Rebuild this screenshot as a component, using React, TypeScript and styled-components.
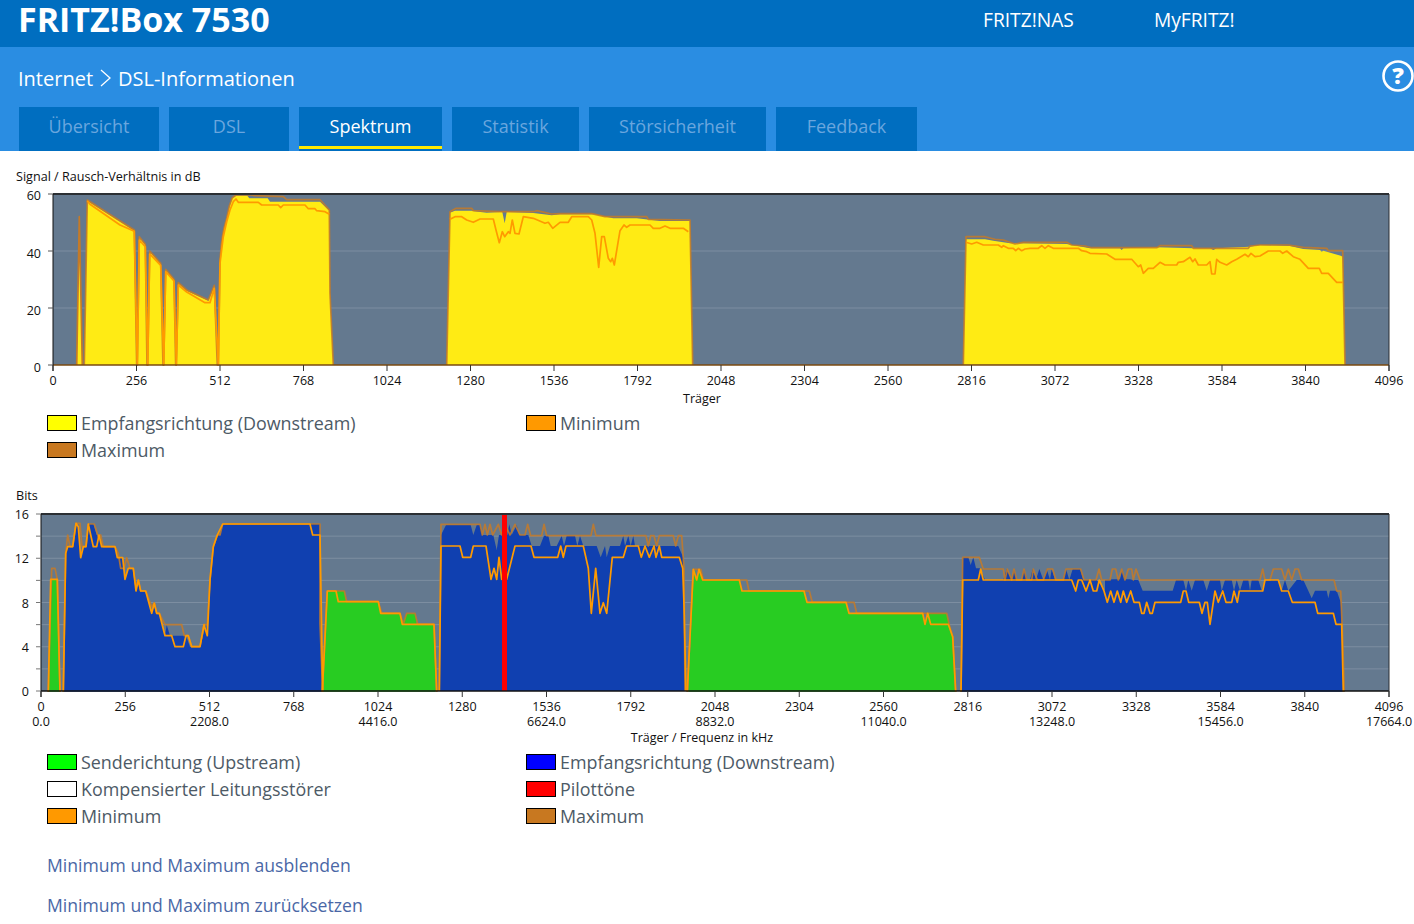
import React from "react";
import styled, { createGlobalStyle } from "styled-components";

const FONT = `"Open Sans", "Noto Sans", sans-serif`;

const Global = createGlobalStyle`
  html, body { margin: 0; padding: 0; background: #fff; }
  body { font-family: ${FONT}; width: 1414px; height: 924px; overflow: hidden; }
`;

const Page = styled.div`
  width: 1414px;
  height: 924px;
  overflow: hidden;
  display: flex;
  flex-direction: column;
`;
const TopBar = styled.header`
  height: 47px;
  box-sizing: border-box;
  padding-bottom: 8px;
  background: #006ec0;
  display: flex;
  align-items: center;
  color: #fff;
  flex: none;
`;
const Brand = styled.div`
  font-size: 34px;
  font-weight: 700;
  line-height: 34px;
  margin: -2px 0 0 18px;
  width: 965px;
  white-space: nowrap;
`;
const TopLink = styled.a<{ $w: number }>`
  font-size: 19.2px;
  width: ${(p) => p.$w}px;
  white-space: nowrap;
  color: #fff;
`;
const SubBar = styled.div`
  height: 104px;
  background: #2a8de2;
  flex: none;
  display: flex;
  flex-direction: column;
  position: relative;
`;
const Crumbs = styled.div`
  height: 60px;
  box-sizing: border-box;
  padding: 2px 0 0 18px;
  display: flex;
  align-items: center;
  gap: 7px;
  color: #fff;
  font-size: 20px;
`;
const HelpIcon = styled.svg`
  position: absolute;
  left: 1382px;
  top: 12px;
`;
const Tabs = styled.nav`
  display: flex;
  gap: 10px;
  padding-left: 19px;
  height: 44px;
`;
const Tab = styled.div<{ $w: number; $active?: boolean }>`
  width: ${(p) => p.$w}px;
  height: 44px;
  box-sizing: border-box;
  background: #006ec0;
  color: ${(p) => (p.$active ? "#fff" : "#6aa6de")};
  font-size: 18px;
  display: flex;
  align-items: center;
  justify-content: center;
  padding-bottom: 6px;
  position: relative;
  &::after {
    content: "";
    display: ${(p) => (p.$active ? "block" : "none")};
    position: absolute;
    left: 0;
    right: 0;
    top: 39px;
    height: 3px;
    background: #ffe900;
  }
`;
const Content = styled.main`
  flex: 1;
  display: flex;
  flex-direction: column;
`;
const ChartTitle = styled.div<{ $top: number }>`
  font-size: 12.6px;
  line-height: 18px;
  color: #111;
  padding-left: 16px;
  margin-top: ${(p) => p.$top}px;
  height: 18px;
`;
const ChartSvg = styled.svg`
  display: block;
  flex: none;
`;
const Legend = styled.div`
  display: grid;
  grid-template-columns: 479px 1fr;
  grid-auto-rows: 27px;
  padding-left: 47px;
`;
const LegendItem = styled.div`
  display: flex;
  align-items: center;
  gap: 4px;
  color: #4d5a66;
  font-size: 17.9px;
  white-space: nowrap;
`;
const Swatch = styled.span<{ $c: string }>`
  width: 30px;
  height: 16px;
  box-sizing: border-box;
  border: 1px solid #000;
  background: ${(p) => p.$c};
  flex: none;
`;
const ActionLink = styled.a<{ $top: number }>`
  display: block;
  margin: ${(p) => p.$top}px 0 0 47px;
  color: #4a67a6;
  font-size: 17.6px;
  line-height: 26px;
  white-space: nowrap;
`;
const Plot = styled.rect`
  fill: #64798f;
`;
const Grid = styled.line`
  stroke: #7d8ea1;
  stroke-width: 1;
`;
const Edge = styled.line<{ $w?: number; $c?: string }>`
  stroke: ${(p) => p.$c ?? "#2b2f33"};
  stroke-width: ${(p) => p.$w ?? 1};
`;
const Area = styled.polygon<{ $c: string }>`
  fill: ${(p) => p.$c};
`;
const Trace = styled.polyline<{ $c: string; $o?: number }>`
  fill: none;
  stroke: ${(p) => p.$c};
  stroke-opacity: ${(p) => p.$o ?? 1};
  stroke-width: 1.7;
  stroke-linejoin: round;
`;
const Pilot = styled.rect`
  fill: #f00;
`;
const Tick = styled.text<{ $anchor?: string }>`
  font-family: ${FONT};
  font-size: 12.5px;
  fill: #111;
  text-anchor: ${(p) => p.$anchor ?? "middle"};
`;

const z = (ox: number, oy: number, s: string) =>
  s
    .split(" ")
    .map((p) => {
      const [x, y] = p.split(",").map(Number);
      return `${(x / 3 + ox).toFixed(1)},${(y / 3 + oy).toFixed(1)}`;
    })
    .join(" ");

type Series = { fill: string; area: string; max: string; min: string };
const YEL = "#ffeb14";
const BLU = "#1040b0";
const GRN = "#28cc22";
const MAXC = "#c47a28";
const MINC = "#ff9a00";

const snrPts = (s: string) => z(0, 160, s);
const snr1Spike = snrPts("230,615 238,170 247,615");
const snr1A = snrPts(
  "253,615 262,122 403,212 410,615 412,615 418,232 436,255 441,615 443,615 449,275 482,312 489,615 491,615 497,330 522,360 527,615 529,615 535,370 560,392 625,422 643,378 652,615 655,615 660,300 664,255 668,225 672,205 680,175 688,140 697,115 708,107 742,107 748,115 803,115 810,125 960,125 988,152 990,400 1000,615"
);
const snr1Max = snrPts(
  "253,615 262,120 403,210 410,615 412,615 418,230 436,253 441,615 443,615 449,273 482,310 489,615 491,615 497,328 522,358 527,615 529,615 535,368 560,390 625,420 643,376 652,615 655,615 660,300 664,255 668,225 672,205 680,175 688,138 697,113 708,105 755,105 763,107 850,110 860,119 960,119 988,150 990,400 1000,615"
);
const snr1Min = snrPts(
  "262,122 270,133 360,195 403,214 412,615 418,240 436,260 443,615 449,282 482,316 491,615 497,335 522,363 529,615 535,375 560,396 615,428 630,428 643,385 655,615 660,310 670,230 680,185 690,150 700,125 708,117 715,127 775,127 785,135 835,135 842,143 850,135 915,135 925,146 945,146 950,152 975,155 988,163"
);

const snrSeries: Series[] = [
  { fill: YEL, area: snr1A, max: snr1Max, min: snr1Min },
  {
    fill: YEL,
    area: z(420, 190, "80,525 90,68 105,62 155,62 175,65 200,68 240,66 247,66 254,100 260,66 340,69 395,76 420,73 520,73 580,85 650,85 670,87 720,93 810,93 818,525"),
    max: z(420, 190, "80,525 90,65 108,55 155,55 160,62 240,65 340,65 350,62 395,72 420,71 515,71 555,80 680,80 685,88 810,90 818,525"),
    min: z(420, 190, "90,88 105,80 125,80 140,90 160,97 180,87 220,87 228,120 238,158 247,125 254,140 265,125 270,130 277,90 285,130 297,132 310,80 340,85 375,100 385,97 398,115 420,97 445,97 455,80 505,80 515,90 525,130 536,232 545,140 553,140 565,205 572,215 577,205 583,225 600,122 612,105 620,112 630,105 690,105 700,115 720,115 735,108 750,115 790,115 805,125"),
  },
  {
    fill: YEL,
    area: z(950, 220, "40,434 48,58 105,58 130,62 180,70 215,70 350,72 420,85 510,85 515,90 520,85 620,82 730,85 780,85 790,90 800,85 900,80 930,75 1020,78 1060,87 1110,90 1115,95 1120,92 1172,107 1178,110 1185,434"),
    max: z(950, 220, "40,434 48,50 105,50 135,58 160,60 195,72 220,67 350,67 365,75 405,78 425,83 620,83 630,77 725,77 730,85 895,85 900,78 930,75 1015,75 1060,82 1130,85 1135,92 1178,92 1185,434"),
    min: z(950, 220, "48,67 65,72 80,67 100,75 145,75 155,82 160,77 175,85 190,85 197,92 205,85 215,92 225,87 240,85 265,85 275,77 285,85 295,77 310,85 385,85 395,92 410,95 420,100 470,102 495,118 545,118 565,140 572,135 580,160 595,145 610,145 630,127 645,135 680,135 685,127 700,125 720,112 728,125 735,117 745,135 770,135 780,125 785,162 795,162 800,118 810,127 830,135 845,125 860,118 885,103 895,110 903,100 915,110 930,108 955,93 990,93 998,100 1010,93 1030,110 1050,118 1075,145 1108,145 1115,160 1135,160 1160,187 1178,187"),
  },
];

const bitSeries: Series[] = [
  {
    fill: GRN,
    area: z(0, 490, "145,605 152,268 172,268 180,605"),
    max: z(0, 490, "145,605 155,235 165,235 172,268 180,605"),
    min: z(0, 490, "145,605 152,268 172,268 180,605"),
  },
  {
    fill: BLU,
    area: z(0, 490, "190,605 197,180 205,170 217,170 228,100 235,105 242,200 250,170 258,170 265,102 280,102 290,135 300,135 305,170 345,170 352,203 368,203 375,268 385,235 400,235 408,303 415,270 422,303 437,303 455,370 463,340 470,370 478,370 495,437 500,404 510,437 550,437 558,437 570,470 600,470 618,404 622,437 630,270 640,170 652,135 660,135 668,102 930,102 960,102 960,135 968,605"),
    max: z(0, 490, "190,605 197,190 203,135 210,170 218,170 228,100 240,100 246,170 258,170 265,102 283,102 295,140 302,135 310,170 345,170 355,190 362,235 372,235 380,203 390,235 400,235 408,290 415,270 422,303 437,303 455,350 463,338 470,370 478,370 495,404 545,404 553,437 565,437 575,470 600,470 612,404 622,404 630,270 640,170 652,135 660,135 668,102 960,102 960,400 968,605"),
    min: z(0, 490, "190,605 197,190 203,170 218,170 228,100 235,110 242,203 250,170 258,170 265,102 280,170 290,170 297,135 305,170 345,170 352,203 368,203 375,268 385,235 400,235 408,303 415,270 422,303 437,303 455,370 463,340 470,370 478,370 495,437 515,437 525,470 550,470 558,437 565,437 575,470 600,470 612,404 622,437 630,270 640,170 652,135 668,102 930,102 938,135 960,135 968,605"),
  },
  {
    fill: GRN,
    area: z(315, 575, "22,350 37,48 88,48 93,80 190,80 197,115 255,115 262,148 275,115 300,115 305,148 357,148 362,350"),
    max: z(315, 575, "22,350 37,48 88,48 95,80 190,80 200,115 255,115 265,148 275,115 300,115 308,148 357,148 365,350"),
    min: z(315, 575, "22,350 37,48 63,48 70,80 190,80 197,115 255,115 262,148 357,148 365,350"),
  },
  {
    fill: BLU,
    area: z(430, 505, "28,558 33,90 48,60 122,60 130,90 140,60 150,60 157,90 190,90 200,135 207,90 232,90 238,58 245,90 260,60 268,90 295,90 305,123 330,123 342,92 355,92 362,123 380,123 395,92 402,123 410,92 435,92 442,123 450,92 460,123 500,123 512,157 525,123 530,157 540,123 570,123 580,92 585,123 595,92 602,123 610,92 615,123 745,123 760,158 765,558"),
    max: z(430, 505, "28,558 33,58 150,58 157,90 165,58 172,90 180,58 188,90 205,58 215,90 225,58 240,90 255,58 270,90 285,90 293,58 302,92 335,92 342,58 350,92 483,92 490,58 498,92 648,92 655,123 662,92 672,92 680,123 688,92 730,92 737,123 745,92 755,92 762,190 765,558"),
    min: z(430, 505, "28,558 33,123 90,123 98,157 122,157 130,123 168,123 183,223 192,190 200,223 207,157 215,223 230,223 255,123 303,123 312,157 383,157 392,123 400,157 408,123 460,123 475,190 484,325 497,190 510,325 520,293 530,325 547,157 580,157 590,123 625,123 634,157 645,123 658,157 672,123 678,157 688,123 695,157 748,157 758,190 762,300 768,558"),
  },
  {
    fill: GRN,
    area: z(680, 540, "25,455 40,120 45,88 50,120 60,88 68,120 180,120 185,153 375,153 382,187 500,187 507,220 730,220 735,253 745,220 800,220 808,253 818,290 825,455"),
    max: z(680, 540, "22,455 40,88 62,88 70,120 200,120 207,153 388,153 397,187 522,187 530,220 800,220 808,255 818,290 827,455"),
    min: z(680, 540, "22,455 40,88 50,120 57,88 68,120 178,120 186,153 372,153 381,187 498,187 507,220 728,220 735,253 743,220 752,253 805,253 818,290 827,455"),
  },
  {
    fill: BLU,
    area: z(950, 540, "33,455 38,52 55,52 62,75 70,52 78,85 90,85 105,120 160,120 170,87 185,120 192,87 200,120 215,120 222,87 232,120 240,120 248,87 258,120 268,87 280,120 290,87 300,120 305,87 315,120 340,120 348,87 358,120 368,87 390,87 400,120 440,120 465,153 465,120 490,118 510,118 517,90 525,118 540,118 548,120 565,120 578,152 668,152 678,120 700,120 708,152 715,120 725,152 735,120 760,120 770,152 780,120 810,120 815,152 825,120 845,120 852,152 860,120 870,152 880,120 895,120 900,152 905,120 925,120 935,152 945,120 985,120 995,152 1005,120 1015,152 1040,120 1060,120 1075,152 1085,175 1095,152 1130,152 1135,175 1140,152 1160,152 1172,187 1178,300 1183,455"),
    max: z(950, 540, "33,455 38,52 88,52 100,87 160,87 165,120 172,87 185,120 192,87 200,120 215,120 222,87 230,120 245,120 250,87 262,120 280,120 292,87 308,87 318,120 340,120 348,87 368,87 392,87 402,120 438,120 447,87 455,120 480,120 487,87 497,87 505,120 515,87 525,120 535,87 545,87 550,120 558,87 570,120 930,120 938,87 945,120 960,120 970,87 995,87 1005,120 1015,87 1025,120 1035,87 1045,87 1055,120 1152,120 1160,153 1172,153 1178,300 1183,455"),
    min: z(950, 540, "33,455 38,120 85,120 92,87 100,120 365,120 377,153 385,120 395,120 408,153 420,120 430,153 440,153 448,120 462,153 472,187 482,153 492,187 502,153 512,187 520,153 530,187 542,153 552,187 568,187 575,220 582,220 590,187 600,220 607,220 615,187 692,187 700,153 708,153 716,187 748,187 756,220 765,187 772,187 780,253 795,153 805,187 818,153 828,187 845,187 852,153 862,187 868,153 938,153 945,120 985,120 995,153 1015,153 1027,187 1095,187 1103,220 1150,220 1158,253 1175,253 1180,455"),
  },
];

const CARRIERS = [0, 256, 512, 768, 1024, 1280, 1536, 1792, 2048, 2304, 2560, 2816, 3072, 3328, 3584, 3840, 4096];

const Traces: React.FC<{ series: Series[] }> = ({ series }) => (
  <>
    {series.map((s, i) => (
      <Area key={i} points={s.area} $c={s.fill} />
    ))}
    {series.map((s, i) => (
      <Trace key={`max${i}`} points={s.max} $c={MAXC} $o={0.85} />
    ))}
    {series.map((s, i) => (
      <Trace key={`min${i}`} points={s.min} $c={MINC} />
    ))}
  </>
);

const SnrChart = () => {
  const L = 53, R = 1389, T = 194, B = 365;
  const x = (c: number) => L + ((R - L) * c) / 4096;
  const yt = [
    [60, 194, 6],
    [40, 251, 7],
    [20, 308, 7],
    [0, 365, 7],
  ];
  return (
    <ChartSvg width="1414" height="223" viewBox="0 186 1414 223">
      <Plot x={L} y={T} width={R - L} height={B - T} />
      <Grid x1={L} x2={R} y1={251} y2={251} />
      <Grid x1={L} x2={R} y1={308} y2={308} />
      <Area points={snr1Spike} $c={YEL} />
      <Trace points={snr1Spike} $c={MAXC} />
      <Traces series={snrSeries} />
      <Edge x1={L} x2={R} y1={365} y2={365} $c="#7a4a10" $w={1.5} />
      <Edge x1={L} x2={R} y1={T} y2={T} $w={2} />
      <Edge x1={L} x2={L} y1={T} y2={B + 6} $c="#111" />
      <Edge x1={R} x2={R} y1={T} y2={B + 6} />
      {yt.map(([v, y, d]) => (
        <React.Fragment key={v}>
          <Edge x1={48} x2={L} y1={y} y2={y} $c="#555" />
          <Tick x={41} y={y + d} $anchor="end">{v}</Tick>
        </React.Fragment>
      ))}
      {CARRIERS.map((c) => (
        <React.Fragment key={c}>
          <Edge x1={x(c)} x2={x(c)} y1={B} y2={B + 6} $c="#333" />
          <Tick x={x(c)} y={385}>{c}</Tick>
        </React.Fragment>
      ))}
      <Tick x={702} y={403}>Träger</Tick>
    </ChartSvg>
  );
};

const BitsChart = () => {
  const L = 41, R = 1389, T = 514, B = 691;
  const x = (c: number) => L + ((R - L) * c) / 4096;
  const y = (b: number) => B - ((B - T) * b) / 16;
  const grid = [2, 4, 6, 8, 10, 12, 14];
  return (
    <ChartSvg width="1414" height="243" viewBox="0 505 1414 243">
      <Plot x={L} y={T} width={R - L} height={B - T} />
      {grid.map((b) => (
        <Grid key={b} x1={L} x2={R} y1={y(b)} y2={y(b)} />
      ))}
      <Traces series={bitSeries} />
      <Pilot x={502} y={T} width={5} height={B - T} />
      <Edge x1={L} x2={R} y1={B} y2={B} $c="#111" $w={1.5} />
      <Edge x1={L} x2={R} y1={T} y2={T} $w={2} />
      <Edge x1={L} x2={L} y1={T} y2={B + 6} $c="#111" />
      <Edge x1={R} x2={R} y1={T} y2={B + 6} />
      {[0, ...grid, 16].map((b) => (
        <Edge key={b} x1={36} x2={L} y1={y(b)} y2={y(b)} $c="#777" />
      ))}
      {[0, 4, 8, 12, 16].map((b) => (
        <Tick key={b} x={29} y={y(b) + 5} $anchor="end">{b}</Tick>
      ))}
      {CARRIERS.map((c, i) => (
        <React.Fragment key={c}>
          <Edge x1={x(c)} x2={x(c)} y1={B} y2={B + 6} $c="#333" />
          <Tick x={x(c)} y={711}>{c}</Tick>
          {i % 2 === 0 && <Tick x={x(c)} y={726}>{((c * 17664) / 4096).toFixed(1)}</Tick>}
        </React.Fragment>
      ))}
      <Tick x={702} y={742}>Träger / Frequenz in kHz</Tick>
    </ChartSvg>
  );
};

const TABS: [string, number, boolean?][] = [
  ["Übersicht", 140],
  ["DSL", 120],
  ["Spektrum", 143, true],
  ["Statistik", 127],
  ["Störsicherheit", 177],
  ["Feedback", 141],
];

const LEGEND1: [string, string][] = [
  ["#ffff00", "Empfangsrichtung (Downstream)"],
  ["#ff9900", "Minimum"],
  ["#c87820", "Maximum"],
];
const LEGEND2: [string, string][] = [
  ["#00ff00", "Senderichtung (Upstream)"],
  ["#0000ff", "Empfangsrichtung (Downstream)"],
  ["#ffffff", "Kompensierter Leitungsstörer"],
  ["#ff0000", "Pilottöne"],
  ["#ff9900", "Minimum"],
  ["#c87820", "Maximum"],
];

const LegendBlock: React.FC<{ items: [string, string][] }> = ({ items }) => (
  <Legend>
    {items.map(([c, t]) => (
      <LegendItem key={t}>
        <Swatch $c={c} />
        {t}
      </LegendItem>
    ))}
  </Legend>
);

export default function App() {
  return (
    <Page>
      <Global />
      <TopBar>
        <Brand>FRITZ!Box 7530</Brand>
        <TopLink $w={171}>FRITZ!NAS</TopLink>
        <TopLink $w={100}>MyFRITZ!</TopLink>
      </TopBar>
      <SubBar>
        <Crumbs>
          <span>Internet</span>
          <svg width="11" height="20" viewBox="0 0 11 20">
            <path d="M1 2 L10 10 L1 18" fill="none" stroke="#fff" strokeWidth="1.3" />
          </svg>
          <span>DSL-Informationen</span>
        </Crumbs>
        <HelpIcon width="32" height="34" viewBox="0 0 32 34">
          <circle cx="16" cy="17" r="14.5" fill="none" stroke="#fff" strokeWidth="2.6" />
          <text x="16" y="25" textAnchor="middle" fontSize="23" fontWeight="800" fill="#fff" fontFamily={FONT}>?</text>
        </HelpIcon>
        <Tabs>
          {TABS.map(([t, w, a]) => (
            <Tab key={t} $w={w} $active={a}>{t}</Tab>
          ))}
        </Tabs>
      </SubBar>
      <Content>
        <ChartTitle $top={17}>Signal / Rausch-Verhältnis in dB</ChartTitle>
        <SnrChart />
        <LegendBlock items={LEGEND1} />
        <ChartTitle $top={24}>Bits</ChartTitle>
        <BitsChart />
        <LegendBlock items={LEGEND2} />
        <ActionLink $top={23}>Minimum und Maximum ausblenden</ActionLink>
        <ActionLink $top={14}>Minimum und Maximum zurücksetzen</ActionLink>
      </Content>
    </Page>
  );
}
